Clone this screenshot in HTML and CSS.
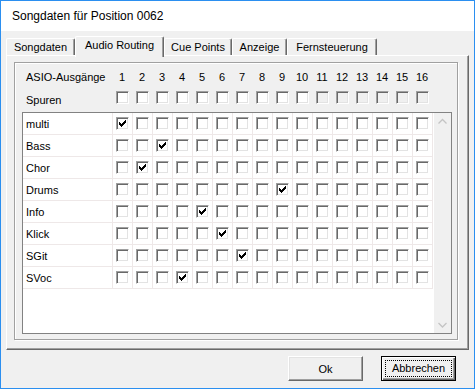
FILE: index.html
```html
<!DOCTYPE html>
<html>
<head>
<meta charset="utf-8">
<link rel="stylesheet" href="styles.css">
</head>
<body>
<div class="window">
  <div class="titlebar">Songdaten für Position 0062</div>
  <div class="client">
    <div class="tabs">
      <div class="tab t1">Songdaten</div>
      <div class="tab t2 active">Audio Routing</div>
      <div class="tab t3">Cue Points</div>
      <div class="tab t4">Anzeige</div>
      <div class="tab t5">Fernsteuerung</div>
    </div>
    <div class="panel">
      <div class="group">
        <div class="head">
          <div class="hlabel">ASIO-Ausgänge</div>
          <div class="num">1</div><div class="num">2</div><div class="num">3</div><div class="num">4</div>
          <div class="num">5</div><div class="num">6</div><div class="num">7</div><div class="num">8</div>
          <div class="num">9</div><div class="num">10</div><div class="num">11</div><div class="num">12</div>
          <div class="num">13</div><div class="num">14</div><div class="num">15</div><div class="num">16</div>
          <div class="hlabel spuren">Spuren</div>
          <div class="hcell"><span class="cb"></span></div><div class="hcell"><span class="cb"></span></div>
          <div class="hcell"><span class="cb"></span></div><div class="hcell"><span class="cb"></span></div>
          <div class="hcell"><span class="cb"></span></div><div class="hcell"><span class="cb"></span></div>
          <div class="hcell"><span class="cb"></span></div><div class="hcell"><span class="cb"></span></div>
          <div class="hcell"><span class="cb"></span></div><div class="hcell"><span class="cb"></span></div>
          <div class="hcell"><span class="cb dis"></span></div><div class="hcell"><span class="cb dis"></span></div>
          <div class="hcell"><span class="cb dis"></span></div><div class="hcell"><span class="cb dis"></span></div>
          <div class="hcell"><span class="cb dis"></span></div><div class="hcell"><span class="cb dis"></span></div>
        </div>
        <div class="listbox">
          <div class="grid">
            <div class="row">
              <div class="label">multi</div>
              <div class="cell"><span class="cb"><svg width="7" height="7" viewBox="0 0 7 7"><path d="M0 2h1v3H0zM1 3h1v3H1zM2 4h1v3H2zM3 3h1v3H3zM4 2h1v3H4zM5 1h1v3H5zM6 0h1v3H6z" fill="#000"/></svg></span></div>
              <div class="cell"><span class="cb"></span></div><div class="cell"><span class="cb"></span></div><div class="cell"><span class="cb"></span></div>
              <div class="cell"><span class="cb"></span></div><div class="cell"><span class="cb"></span></div><div class="cell"><span class="cb"></span></div>
              <div class="cell"><span class="cb"></span></div><div class="cell"><span class="cb"></span></div><div class="cell"><span class="cb"></span></div>
              <div class="cell"><span class="cb"></span></div><div class="cell"><span class="cb"></span></div><div class="cell"><span class="cb"></span></div>
              <div class="cell"><span class="cb"></span></div><div class="cell"><span class="cb"></span></div><div class="cell"><span class="cb"></span></div>
            </div>
            <div class="row">
              <div class="label">Bass</div>
              <div class="cell"><span class="cb"></span></div><div class="cell"><span class="cb"></span></div>
              <div class="cell"><span class="cb"><svg width="7" height="7" viewBox="0 0 7 7"><path d="M0 2h1v3H0zM1 3h1v3H1zM2 4h1v3H2zM3 3h1v3H3zM4 2h1v3H4zM5 1h1v3H5zM6 0h1v3H6z" fill="#000"/></svg></span></div>
              <div class="cell"><span class="cb"></span></div><div class="cell"><span class="cb"></span></div><div class="cell"><span class="cb"></span></div>
              <div class="cell"><span class="cb"></span></div><div class="cell"><span class="cb"></span></div><div class="cell"><span class="cb"></span></div>
              <div class="cell"><span class="cb"></span></div><div class="cell"><span class="cb"></span></div><div class="cell"><span class="cb"></span></div>
              <div class="cell"><span class="cb"></span></div><div class="cell"><span class="cb"></span></div><div class="cell"><span class="cb"></span></div>
              <div class="cell"><span class="cb"></span></div>
            </div>
            <div class="row">
              <div class="label">Chor</div>
              <div class="cell"><span class="cb"></span></div>
              <div class="cell"><span class="cb"><svg width="7" height="7" viewBox="0 0 7 7"><path d="M0 2h1v3H0zM1 3h1v3H1zM2 4h1v3H2zM3 3h1v3H3zM4 2h1v3H4zM5 1h1v3H5zM6 0h1v3H6z" fill="#000"/></svg></span></div>
              <div class="cell"><span class="cb"></span></div><div class="cell"><span class="cb"></span></div><div class="cell"><span class="cb"></span></div>
              <div class="cell"><span class="cb"></span></div><div class="cell"><span class="cb"></span></div><div class="cell"><span class="cb"></span></div>
              <div class="cell"><span class="cb"></span></div><div class="cell"><span class="cb"></span></div><div class="cell"><span class="cb"></span></div>
              <div class="cell"><span class="cb"></span></div><div class="cell"><span class="cb"></span></div><div class="cell"><span class="cb"></span></div>
              <div class="cell"><span class="cb"></span></div><div class="cell"><span class="cb"></span></div>
            </div>
            <div class="row">
              <div class="label">Drums</div>
              <div class="cell"><span class="cb"></span></div><div class="cell"><span class="cb"></span></div><div class="cell"><span class="cb"></span></div>
              <div class="cell"><span class="cb"></span></div><div class="cell"><span class="cb"></span></div><div class="cell"><span class="cb"></span></div>
              <div class="cell"><span class="cb"></span></div><div class="cell"><span class="cb"></span></div>
              <div class="cell"><span class="cb"><svg width="7" height="7" viewBox="0 0 7 7"><path d="M0 2h1v3H0zM1 3h1v3H1zM2 4h1v3H2zM3 3h1v3H3zM4 2h1v3H4zM5 1h1v3H5zM6 0h1v3H6z" fill="#000"/></svg></span></div>
              <div class="cell"><span class="cb"></span></div><div class="cell"><span class="cb"></span></div><div class="cell"><span class="cb"></span></div>
              <div class="cell"><span class="cb"></span></div><div class="cell"><span class="cb"></span></div><div class="cell"><span class="cb"></span></div>
              <div class="cell"><span class="cb"></span></div>
            </div>
            <div class="row">
              <div class="label">Info</div>
              <div class="cell"><span class="cb"></span></div><div class="cell"><span class="cb"></span></div><div class="cell"><span class="cb"></span></div>
              <div class="cell"><span class="cb"></span></div>
              <div class="cell"><span class="cb"><svg width="7" height="7" viewBox="0 0 7 7"><path d="M0 2h1v3H0zM1 3h1v3H1zM2 4h1v3H2zM3 3h1v3H3zM4 2h1v3H4zM5 1h1v3H5zM6 0h1v3H6z" fill="#000"/></svg></span></div>
              <div class="cell"><span class="cb"></span></div><div class="cell"><span class="cb"></span></div><div class="cell"><span class="cb"></span></div>
              <div class="cell"><span class="cb"></span></div><div class="cell"><span class="cb"></span></div><div class="cell"><span class="cb"></span></div>
              <div class="cell"><span class="cb"></span></div><div class="cell"><span class="cb"></span></div><div class="cell"><span class="cb"></span></div>
              <div class="cell"><span class="cb"></span></div><div class="cell"><span class="cb"></span></div>
            </div>
            <div class="row">
              <div class="label">Klick</div>
              <div class="cell"><span class="cb"></span></div><div class="cell"><span class="cb"></span></div><div class="cell"><span class="cb"></span></div>
              <div class="cell"><span class="cb"></span></div><div class="cell"><span class="cb"></span></div>
              <div class="cell"><span class="cb"><svg width="7" height="7" viewBox="0 0 7 7"><path d="M0 2h1v3H0zM1 3h1v3H1zM2 4h1v3H2zM3 3h1v3H3zM4 2h1v3H4zM5 1h1v3H5zM6 0h1v3H6z" fill="#000"/></svg></span></div>
              <div class="cell"><span class="cb"></span></div><div class="cell"><span class="cb"></span></div><div class="cell"><span class="cb"></span></div>
              <div class="cell"><span class="cb"></span></div><div class="cell"><span class="cb"></span></div><div class="cell"><span class="cb"></span></div>
              <div class="cell"><span class="cb"></span></div><div class="cell"><span class="cb"></span></div><div class="cell"><span class="cb"></span></div>
              <div class="cell"><span class="cb"></span></div>
            </div>
            <div class="row">
              <div class="label">SGit</div>
              <div class="cell"><span class="cb"></span></div><div class="cell"><span class="cb"></span></div><div class="cell"><span class="cb"></span></div>
              <div class="cell"><span class="cb"></span></div><div class="cell"><span class="cb"></span></div><div class="cell"><span class="cb"></span></div>
              <div class="cell"><span class="cb"><svg width="7" height="7" viewBox="0 0 7 7"><path d="M0 2h1v3H0zM1 3h1v3H1zM2 4h1v3H2zM3 3h1v3H3zM4 2h1v3H4zM5 1h1v3H5zM6 0h1v3H6z" fill="#000"/></svg></span></div>
              <div class="cell"><span class="cb"></span></div><div class="cell"><span class="cb"></span></div><div class="cell"><span class="cb"></span></div>
              <div class="cell"><span class="cb"></span></div><div class="cell"><span class="cb"></span></div><div class="cell"><span class="cb"></span></div>
              <div class="cell"><span class="cb"></span></div><div class="cell"><span class="cb"></span></div><div class="cell"><span class="cb"></span></div>
            </div>
            <div class="row">
              <div class="label">SVoc</div>
              <div class="cell"><span class="cb"></span></div><div class="cell"><span class="cb"></span></div><div class="cell"><span class="cb"></span></div>
              <div class="cell"><span class="cb"><svg width="7" height="7" viewBox="0 0 7 7"><path d="M0 2h1v3H0zM1 3h1v3H1zM2 4h1v3H2zM3 3h1v3H3zM4 2h1v3H4zM5 1h1v3H5zM6 0h1v3H6z" fill="#000"/></svg></span></div>
              <div class="cell"><span class="cb"></span></div><div class="cell"><span class="cb"></span></div><div class="cell"><span class="cb"></span></div>
              <div class="cell"><span class="cb"></span></div><div class="cell"><span class="cb"></span></div><div class="cell"><span class="cb"></span></div>
              <div class="cell"><span class="cb"></span></div><div class="cell"><span class="cb"></span></div><div class="cell"><span class="cb"></span></div>
              <div class="cell"><span class="cb"></span></div><div class="cell"><span class="cb"></span></div><div class="cell"><span class="cb"></span></div>
            </div>
          </div>
          <div class="scrollbar">
            <div class="arrow"><svg width="17" height="17" viewBox="0 0 17 17"><polyline points="4.5,10.5 8.5,6.5 12.5,10.5" fill="none" stroke="#c4c4c4" stroke-width="1.3"/></svg></div>
            <div class="arrow"><svg width="17" height="17" viewBox="0 0 17 17"><polyline points="4.5,7 8.5,11 12.5,7" fill="none" stroke="#c4c4c4" stroke-width="1.3"/></svg></div>
          </div>
        </div>
      </div>
    </div>
    <div class="buttons">
      <button class="btn">Ok</button>
      <button class="btn default"><span class="focus">Abbrechen</span></button>
    </div>
  </div>
</div>
</body>
</html>
```

FILE: styles.css
```css
* { box-sizing: border-box; }
html, body { margin: 0; padding: 0; }
body {
  width: 475px;
  height: 389px;
  overflow: hidden;
  background: #f0f0f0;
  font-family: "Liberation Sans", Arial, sans-serif;
  font-size: 11px;
  color: #000;
}
.window {
  width: 475px;
  height: 389px;
  border: 1px solid #2b8ff0;
  display: flex;
  flex-direction: column;
  background: #f0f0f0;
}
.titlebar {
  height: 30px;
  flex: none;
  background: #fff;
  font-size: 12px;
  line-height: 30px;
  padding-left: 11px;
}
.client {
  flex: 1;
  padding: 5px 5px 0 5px;
}
.tabs {
  display: flex;
  align-items: flex-end;
  height: 19px;
}
.tab {
  height: 17px;
  border-top: 1px solid #fff;
  border-left: 1px solid #fff;
  border-right: 1px solid #696969;
  box-shadow: inset -1px 0 0 #a0a0a0;
  border-radius: 2px 2px 0 0;
  line-height: 16px;
  text-align: center;
  white-space: nowrap;
  background: #f0f0f0;
}
.tab.active {
  height: 21px;
  margin-bottom: -2px;
  position: relative;
  z-index: 1;
}
.t1 { width: 69px; }
.t2 { width: 89px; }
.t3 { width: 68px; }
.t4 { width: 55px; }
.t5 { width: 90px; }
.panel {
  width: 463px;
  height: 295px;
  border-left: 1px solid #fff;
  border-top: 1px solid #fff;
  border-right: 1px solid #696969;
  border-bottom: 1px solid #696969;
  box-shadow: inset -1px -1px 0 #a0a0a0;
  padding: 6px 0 0 7px;
}
.group {
  width: 444px;
  height: 278px;
  border: 1px solid #a0a0a0;
  box-shadow: inset 1px 1px 0 #fff, 1px 1px 0 #fff;
  padding: 4px 0 0 7px;
}
.head {
  display: grid;
  grid-template-columns: 90px repeat(16, 20px);
  grid-template-rows: 20px 20px;
}
.hlabel {
  padding-left: 4px;
  line-height: 20px;
  white-space: nowrap;
}
.hlabel.spuren { padding-top: 6px; line-height: 14px; }
.num {
  text-align: center;
  line-height: 20px;
}
.hcell { padding: 4px 0 0 4px; }
.listbox {
  margin-top: 5px;
  width: 430px;
  height: 222px;
  border: 1px solid #828282;
  background: #fff;
  display: flex;
}
.grid { width: 410px; flex: none; }
.row {
  display: grid;
  grid-template-columns: 90px repeat(16, 20px);
  height: 22px;
}
.row > div {
  border-right: 1px solid #eee8e8;
  border-bottom: 1px solid #eee8e8;
}
.label {
  padding: 2px 0 0 3px;
  line-height: 19px;
}
.cell { padding: 4px 0 0 3px; }
.scrollbar {
  margin-left: 1px;
  width: 17px;
  flex: none;
  background: #f0f0f0;
  display: flex;
  flex-direction: column;
  justify-content: space-between;
}
.arrow { height: 17px; }
.arrow svg { display: block; }
.cb {
  display: block;
  position: relative;
  width: 13px;
  height: 13px;
  border-top: 1px solid #a0a0a0;
  border-left: 1px solid #a0a0a0;
  border-right: 1px solid #fff;
  border-bottom: 1px solid #fff;
  box-shadow: inset 1px 1px 0 #696969, inset -1px -1px 0 #e3e3e3;
  background: #fff;
}
.cb.dis { background: #f0f0f0; }
.cb svg {
  position: absolute;
  left: 2px;
  top: 2px;
  display: block;
}
.buttons {
  display: flex;
  justify-content: flex-end;
  gap: 18px;
  padding-right: 13px;
  margin-top: 6px;
}
.btn {
  width: 75px;
  height: 25px;
  padding: 0;
  font-family: "Liberation Sans", Arial, sans-serif;
  font-size: 11px;
  color: #000;
  background: #f0f0f0;
  border-top: 1px solid #fff;
  border-left: 1px solid #fff;
  border-right: 1px solid #696969;
  border-bottom: 1px solid #696969;
  box-shadow: inset -1px -1px 0 #a0a0a0, inset 1px 1px 0 #e3e3e3;
  border-radius: 0;
}
.btn.default {
  border: 1px solid #000;
  box-shadow: inset 1px 1px 0 #fff, inset -1px -1px 0 #696969, inset -2px -2px 0 #a0a0a0;
  padding: 3px;
}
.focus {
  display: block;
  height: 17px;
  border: 1px dotted #000;
  line-height: 15px;
  text-align: center;
}
```
